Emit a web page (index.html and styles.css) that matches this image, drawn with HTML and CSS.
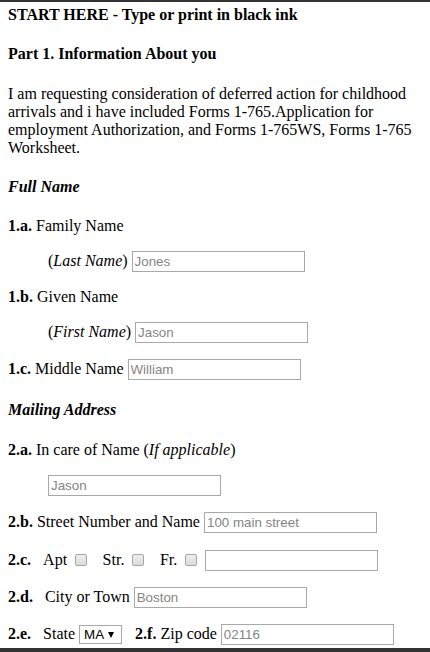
FILE: index.html
```html
<!DOCTYPE html>
<html>
<head>
<meta charset="utf-8">
<link rel="stylesheet" href="styles.css">
</head>
<body>
<div class="frame">
  <div class="content">
    <h4 class="first">START HERE - Type or print in black ink</h4>
    <h4>Part 1. Information About you</h4>
    <p>I am requesting consideration of deferred action for childhood arrivals and i have included Forms 1-765.Application for employment Authorization, and Forms 1-765WS, Forms 1-765 Worksheet.</p>
    <h4><i>Full Name</i></h4>
    <p><b>1.a.</b> Family Name</p>
    <p class="indent">(<i>Last Name</i>) <input class="field" type="text" placeholder="Jones"></p>
    <p><b>1.b.</b> Given Name</p>
    <p class="indent">(<i>First Name</i>) <input class="field" type="text" placeholder="Jason"></p>
    <p><b>1.c.</b> Middle Name <input class="field" type="text" placeholder="William"></p>
    <h4><i>Mailing Address</i></h4>
    <p><b>2.a.</b> In care of Name (<i>If applicable</i>)</p>
    <p class="indent"><input class="field" type="text" placeholder="Jason"></p>
    <p><b>2.b.</b> Street Number and Name <input class="field" type="text" placeholder="100 main street"></p>
    <p class="opts"><b>2.c.</b><span class="gap">Apt</span><input class="check" type="checkbox"><span class="opt">Str.</span><input class="check" type="checkbox"><span class="opt">Fr.</span><input class="check" type="checkbox"><input class="field after-check" type="text"></p>
    <p><b>2.d.</b><span class="gap">City or Town</span> <input class="field" type="text" placeholder="Boston"></p>
    <p><b>2.e.</b><span class="gap">State</span> <span class="select-wrap"><select class="state"><option>MA</option></select></span><b class="gap2">2.f.</b> Zip code <input class="field" type="text" placeholder="02116"></p>
  </div>
</div>
</body>
</html>
```
FILE: styles.css
```css
html, body {
  margin: 0;
  padding: 0;
  background: #fff;
}
.frame {
  height: 652px;
  box-sizing: border-box;
  border-top: 2px solid #333;
  border-bottom: 4px solid #333;
  overflow: hidden;
}
.content {
  padding: 0 8px;
  font-family: "Liberation Serif", "Times New Roman", serif;
  font-size: 16px;
  color: #000;
}
h4 {
  font-size: 16px;
  font-weight: bold;
  margin: 21.28px 0;
}
h4.first {
  margin-top: 4px;
}
p {
  margin: 16px 0;
}
.indent {
  padding-left: 40px;
}
.opts {
  margin-top: 17px;
}
.field {
  box-sizing: border-box;
  width: 173px;
  height: 21px;
  border: 1px solid #a9a9a9;
  padding: 1px 2px;
  margin: 0;
  font-family: "Liberation Sans", Arial, sans-serif;
  font-size: 13.333px;
  vertical-align: baseline;
  background: #fff;
}
.field::placeholder {
  color: #858585;
}
.gap {
  margin-left: 12px;
}
.gap2 {
  margin-left: 13px;
}
.opt {
  margin-left: 15.5px;
}
.after-check {
  margin-left: 8px;
}
.check {
  appearance: none;
  -webkit-appearance: none;
  width: 12px;
  height: 12px;
  box-sizing: border-box;
  border: 1px solid #a6a6a6;
  border-radius: 2px;
  background: linear-gradient(#ededed, #dcdcdc);
  margin: 0 0 0 8px;
  vertical-align: -1px;
}
.select-wrap {
  position: relative;
  display: inline-block;
}
.state {
  appearance: none;
  -webkit-appearance: none;
  box-sizing: border-box;
  width: 43px;
  height: 19px;
  border: 1px solid #a9a9a9;
  border-radius: 0;
  background: #fff;
  padding: 0 0 0 4px;
  margin: 0;
  font-family: "Liberation Sans", Arial, sans-serif;
  font-size: 13.333px;
  color: #000;
}
.select-wrap::after {
  content: "";
  position: absolute;
  right: 8px;
  top: 7px;
  border-left: 3.5px solid transparent;
  border-right: 3.5px solid transparent;
  border-top: 6px solid #000;
  pointer-events: none;
}
```
